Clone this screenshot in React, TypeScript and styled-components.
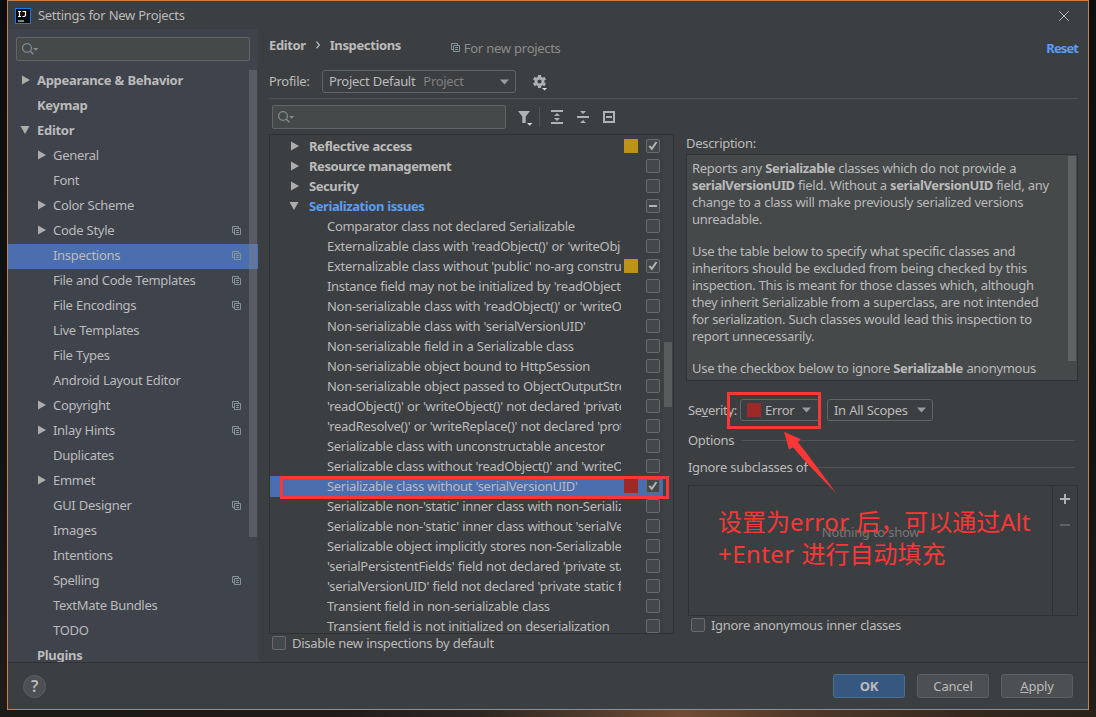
import React from "react";
import styled, { createGlobalStyle, css } from "styled-components";

const Global = createGlobalStyle`
  * { box-sizing: border-box; }
  body { margin: 0; }
`;

const Desktop = styled.div`
  position: relative;
  width: 1096px;
  height: 717px;
  padding: 0 7px 7px;
  overflow: hidden;
  font: 13px/20px "Noto Sans", "Noto Sans CJK SC", sans-serif;
  letter-spacing: -0.3px;
  word-spacing: 0.3px;
  color: #bbbbbb;
  background:
    linear-gradient(90deg, #1d1b17 0, #1f1c18 330px, #2c2723 480px, #4f3a2c 590px, #704c33 680px, #503828 800px, #35291f 960px, #2a2119 1096px) 0 709px / 1096px 8px no-repeat,
    linear-gradient(#0b0d0f 0, #101214 60%, #211d18 100%);
`;

const Dialog = styled.div`
  width: 1082px;
  height: 710px;
  border: 1px solid #cc7f48;
  background: #3c3f41;
  display: flex;
  flex-direction: column;
`;

const TitleBar = styled.header`
  height: 28px;
  flex: none;
  display: flex;
  align-items: center;
  padding: 1px 18px 0 7px;
  gap: 7px;
  svg:last-child { margin-left: auto; }
`;

const TitleText = styled.span`
  padding-bottom: 2px;
`;

const Body = styled.div`
  flex: 1;
  min-height: 0;
  display: flex;
`;

const Sidebar = styled.nav`
  width: 250px;
  background: #3f434c;
  display: flex;
  flex-direction: column;
  padding-top: 8px;
`;

const SearchBox = styled.div<{ $indent?: number }>`
  width: 234px;
  height: 24px;
  flex: none;
  margin-left: ${p => p.$indent ?? 0}px;
  border: 1px solid #646464;
  border-radius: 2px;
  background: #45494a;
  padding: 3px 5px;
  line-height: 0;
`;

const SideScroll = styled.div`
  margin-top: 8px;
  flex: 1;
  min-height: 0;
  overflow: hidden;
  position: relative;
`;

const Thumb = styled.div<{ $top: number; $height: number; $right: number; $tint: string }>`
  position: absolute;
  top: ${p => p.$top}px;
  right: ${p => p.$right}px;
  width: 8px;
  height: ${p => p.$height}px;
  background: ${p => p.$tint};
`;

const SideRow = styled.div<{ $level: number; $selected?: boolean }>`
  height: 25px;
  display: flex;
  align-items: center;
  padding: 0 17px 3px ${p => (p.$level ? 28 : 12)}px;
  background: ${p => (p.$selected ? "#4b6eaf" : "transparent")};
  font-weight: ${p => (p.$level ? 400 : 700)};
  > svg:last-child { margin-left: auto; }
`;

const ArrowSlot = styled.span<{ $tree?: boolean }>`
  width: ${p => (p.$tree ? 20 : 17)}px;
  flex: none;
  display: flex;
  align-items: center;
`;

const Main = styled.main`
  flex: 1;
  min-width: 0;
  display: flex;
  flex-direction: column;
  padding: 0 10px 0 11px;
`;

const Crumbs = styled.div`
  height: 36px;
  flex: none;
  display: flex;
  align-items: center;
  padding-bottom: 5px;
`;

const Bold = styled.b`
  font-weight: 700;
  letter-spacing: -0.38px;
`;

const Chevron = styled.span`
  width: 24px;
  display: flex;
  justify-content: center;
`;

const Hint = styled.span`
  display: flex;
  align-items: center;
  gap: 4px;
  margin: 6px 0 0 50px;
  color: #8c8c8c;
`;

const Reset = styled.a`
  margin: 6px 0 0 auto;
  font-weight: 700;
  letter-spacing: -0.9px;
  color: #589df6;
`;

const ProfileRow = styled.div`
  height: 34px;
  flex: none;
  display: flex;
  align-items: center;
  border-bottom: 1px solid #515456;
`;

const Label = styled.span<{ $width?: number }>`
  width: ${p => (p.$width ? p.$width + "px" : "auto")};
  flex: none;
  white-space: nowrap;
  margin-top: -1px;
`;

const Combo = styled.div<{ $width: number; $height: number; $end?: number }>`
  width: ${p => p.$width}px;
  height: ${p => p.$height}px;
  flex: none;
  display: flex;
  align-items: center;
  border: 1px solid #646464;
  border-radius: 3px;
  padding: 0 ${p => p.$end ?? 6}px 0 6px;
  white-space: nowrap;
  > svg { margin-left: auto; }
`;

const ComboText = styled.span`
  margin-top: -1px;
`;

const Muted = styled.span`
  color: #808080;
  margin-left: 8px;
`;

const GearSlot = styled.span`
  margin-left: 15px;
  line-height: 0;
`;

const Columns = styled.div`
  flex: 1;
  min-height: 0;
  display: flex;
`;

const Left = styled.section`
  width: 405px;
  flex: none;
  display: flex;
  flex-direction: column;
`;

const Toolbar = styled.div`
  display: flex;
  align-items: center;
  height: 35px;
  padding: 1px 0 0 3px;
`;

const Tools = styled.div`
  display: flex;
  align-items: center;
  gap: 10px;
  margin-left: 11px;
`;

const Separator = styled.span`
  width: 1px;
  height: 20px;
  background: #515456;
  margin: 0 -1px 0 -4px;
`;

const Tree = styled.div`
  position: relative;
  height: 500px;
  border: 1px solid #2f3133;
  padding-top: 1px;
  overflow: hidden;
`;

const Gutter = styled.div`
  position: absolute;
  top: 0;
  right: 0;
  bottom: 0;
  width: 10px;
  background: #3f4244;
`;

const TreeRow = styled.div<{ $group?: boolean; $active?: boolean; $selected?: boolean }>`
  height: ${p => (p.$selected ? 21 : 20)}px;
  margin-bottom: ${p => (p.$selected ? -1 : 0)}px;
  display: flex;
  align-items: center;
  padding: 0 13px 0 ${p => (p.$group ? 19 : 57)}px;
  margin-right: ${p => (p.$selected ? 10 : 0)}px;
  ${p => p.$selected && css`padding-right: 3px; padding-bottom: 1px;`}
  background: ${p => (p.$selected ? "#4b6eaf" : "transparent")};
  font-weight: ${p => (p.$group ? 700 : 400)};
  ${p => p.$group && css`letter-spacing: -0.42px;`}
  color: ${p => (p.$active ? "#589df6" : "#bbbbbb")};
`;

const TreeText = styled.span`
  flex: 1;
  min-width: 0;
  overflow: hidden;
  white-space: nowrap;
  margin-right: 3px;
`;

const Swatch = styled.span<{ $tint: string; $gap?: number }>`
  width: 14px;
  height: 14px;
  flex: none;
  margin-right: ${p => p.$gap ?? 8}px;
  background: ${p => p.$tint};
`;

const Box = styled.span`
  width: 14px;
  height: 14px;
  flex: none;
  border: 1px solid #6b6b6b;
  border-radius: 2px;
  background: #43494a;
  line-height: 0;
  svg { display: block; }
`;

const CheckLine = styled.div<{ $indent: number }>`
  display: flex;
  align-items: center;
  height: 14px;
  gap: 6px;
  padding-left: ${p => p.$indent}px;
  margin-top: 2px;
`;

const Right = styled.section`
  width: 392px;
  margin-left: 12px;
  padding-top: 35px;
  display: flex;
  flex-direction: column;
`;

const DescBox = styled.div`
  position: relative;
  height: 227px;
  margin-top: 1px;
  border: 1px solid #2f3133;
  background: #45494a;
  padding: 5px 5px 0;
  line-height: 17px;
  overflow: hidden;
  p { margin: 0 0 15px; white-space: nowrap; }
`;

const SeverityRow = styled.div`
  display: flex;
  align-items: center;
  height: 22px;
  margin-top: 18px;
  padding-left: 2px;
`;

const Spacer = styled.span`
  width: 7px;
`;

const Section = styled.div<{ $top: number }>`
  display: flex;
  align-items: center;
  gap: 7px;
  height: 20px;
  margin: ${p => p.$top}px 3px 0 2px;
  white-space: nowrap;
  &::after { content: ""; flex: 1; height: 1px; background: #515456; }
`;

const ListBox = styled.div`
  height: 131px;
  margin: 8px 0 0 2px;
  border: 1px solid #2f3133;
  display: flex;
`;

const ListEmpty = styled.div`
  flex: 1;
  display: flex;
  justify-content: center;
  padding-top: 36px;
  color: #777777;
`;

const ListTools = styled.div`
  width: 25px;
  border-left: 1px solid #2f3133;
  padding: 6px 0 0 5px;
  line-height: 0;
  display: flex;
  flex-direction: column;
  gap: 12px;
`;

const Footer = styled.footer`
  height: 47px;
  flex: none;
  border-top: 1px solid #2f3133;
  display: flex;
  align-items: center;
  padding: 0 15px;
  gap: 12px;
`;

const Help = styled.span`
  width: 23px;
  height: 23px;
  border-radius: 50%;
  border: 1px solid #5e6060;
  background: #4c5052;
  margin-right: auto;
  text-align: center;
  font-size: 16px;
  font-weight: 600;
  line-height: 21px;
`;

const Button = styled.button<{ $primary?: boolean }>`
  width: 72px;
  height: 24px;
  padding: 0;
  border: 1px solid ${p => (p.$primary ? "#4c708c" : "#5e6060")};
  border-radius: 3px;
  background: ${p => (p.$primary ? "#365880" : "#4c5052")};
  color: #bbbbbb;
  font: inherit;
  letter-spacing: -0.2px;
  font-weight: ${p => (p.$primary ? 700 : 400)};
`;

const Mark = styled.div<{ $x: number; $y: number; $w: number; $h: number }>`
  position: absolute;
  left: ${p => p.$x}px;
  top: ${p => p.$y}px;
  width: ${p => p.$w}px;
  height: ${p => p.$h}px;
  border: 3px solid #fd3636;
`;

const Pointer = styled.svg`
  position: absolute;
  left: 780px;
  top: 428px;
`;

const Note = styled.div`
  position: absolute;
  left: 718px;
  top: 506px;
  font: 24px/32px "Noto Sans", "Noto Sans CJK SC", sans-serif;
  letter-spacing: 0;
  word-spacing: 0;
  color: #fd3636;
  white-space: nowrap;
`;

const Latin = styled.span`
  letter-spacing: 0.45px;
`;

const Tri = ({ open }: { open?: boolean }) => (
  <svg width="10" height="10" viewBox="0 0 10 10" fill="#adadad">
    {open ? <path d="M.5 1h9L5 9z" /> : <path d="M2 .5v9L10 5z" />}
  </svg>
);

const Down = () => (
  <svg width="9" height="6" viewBox="0 0 9 6" fill="#9a9da0"><path d="M0 .5h9L4.5 5.5z" /></svg>
);

const Magnifier = () => (
  <svg width="18" height="16" viewBox="0 0 18 16" fill="none" stroke="#7f8b91" strokeWidth="1.3">
    <circle cx="5" cy="7" r="4.4" />
    <path d="M8.3 10.3l3 3" strokeWidth="1.6" />
    <path d="M11 7h5.4L13.7 9.8z" fill="#7f8b91" stroke="none" />
  </svg>
);

const Copy = () => (
  <svg width="9" height="9" viewBox="0 0 9 9" fill="none" stroke="#87939a">
    <path d="M2 6.5H.5v-6h6V2M2.500 2.500h6v6h-6zM4 4.500h3M4 6.500h3" />
  </svg>
);

const Check = ({ state }: { state: string }) => (
  <Box>
    {state === "on" && (
      <svg width="12" height="12" viewBox="0 0 12 12" fill="none" stroke="#b4b4b4" strokeWidth="2"><path d="M2.300 5.800l2.500 3L9.500 2" /></svg>
    )}
    {state === "mixed" && (
      <svg width="12" height="12" viewBox="0 0 12 12"><path d="M2 5h8v2H2z" fill="#b4b4b4" /></svg>
    )}
  </Box>
);

type Side = { t: string; level?: number; arrow?: "open" | "closed"; copy?: boolean; sel?: boolean };
const side: Side[] = [
  { t: "Appearance & Behavior", arrow: "closed" },
  { t: "Keymap" },
  { t: "Editor", arrow: "open" },
  { t: "General", level: 1, arrow: "closed" },
  { t: "Font", level: 1 },
  { t: "Color Scheme", level: 1, arrow: "closed" },
  { t: "Code Style", level: 1, arrow: "closed", copy: true },
  { t: "Inspections", level: 1, copy: true, sel: true },
  { t: "File and Code Templates", level: 1, copy: true },
  { t: "File Encodings", level: 1, copy: true },
  { t: "Live Templates", level: 1 },
  { t: "File Types", level: 1 },
  { t: "Android Layout Editor", level: 1 },
  { t: "Copyright", level: 1, arrow: "closed", copy: true },
  { t: "Inlay Hints", level: 1, arrow: "closed", copy: true },
  { t: "Duplicates", level: 1 },
  { t: "Emmet", level: 1, arrow: "closed" },
  { t: "GUI Designer", level: 1, copy: true },
  { t: "Images", level: 1 },
  { t: "Intentions", level: 1 },
  { t: "Spelling", level: 1, copy: true },
  { t: "TextMate Bundles", level: 1 },
  { t: "TODO", level: 1 },
  { t: "Plugins" },
];

type Insp = { t: string; group?: "open" | "closed"; state?: string; tint?: string; sel?: boolean };
const inspections: Insp[] = [
  { t: "Reflective access", group: "closed", state: "on", tint: "#be9117" },
  { t: "Resource management", group: "closed" },
  { t: "Security", group: "closed" },
  { t: "Serialization issues", group: "open", state: "mixed" },
  { t: "Comparator class not declared Serializable" },
  { t: "Externalizable class with 'readObject()' or 'writeObject()'" },
  { t: "Externalizable class without 'public' no-arg constructor", state: "on", tint: "#be9117" },
  { t: "Instance field may not be initialized by 'readObject()'" },
  { t: "Non-serializable class with 'readObject()' or 'writeObject()'" },
  { t: "Non-serializable class with 'serialVersionUID'" },
  { t: "Non-serializable field in a Serializable class" },
  { t: "Non-serializable object bound to HttpSession" },
  { t: "Non-serializable object passed to ObjectOutputStream" },
  { t: "'readObject()' or 'writeObject()' not declared 'private'" },
  { t: "'readResolve()' or 'writeReplace()' not declared 'protected'" },
  { t: "Serializable class with unconstructable ancestor" },
  { t: "Serializable class without 'readObject()' and 'writeObject()'" },
  { t: "Serializable class without 'serialVersionUID'", state: "on", tint: "#9e2927", sel: true },
  { t: "Serializable non-'static' inner class with non-Serializable outer" },
  { t: "Serializable non-'static' inner class without 'serialVersionUID'" },
  { t: "Serializable object implicitly stores non-Serializable object" },
  { t: "'serialPersistentFields' field not declared 'private static final'" },
  { t: "'serialVersionUID' field not declared 'private static final long'" },
  { t: "Transient field in non-serializable class" },
  { t: "Transient field is not initialized on deserialization" },
];

export default function App() {
  return (
    <Desktop>
      <Global />
      <Dialog>
        <TitleBar>
          <svg width="16" height="16" viewBox="0 0 16 16">
            <rect x=".5" y=".5" width="15" height="15" fill="#0a0a0a" stroke="#137cf3" />
            <path d="M3 3.500h3M4.500 3.500v5M3 8.500h3M7.500 3.500h3v4L9.500 8.500H7.500M3 13h6" fill="none" stroke="#fff" strokeWidth="1.200" />
          </svg>
          <TitleText>Settings for New Projects</TitleText>
          <svg width="12" height="12" viewBox="0 0 12 12" stroke="#b4b4b4" strokeWidth="1"><path d="M1 1l10 10M11 1L1 11" /></svg>
        </TitleBar>
        <Body>
          <Sidebar>
            <SearchBox $indent={8}><Magnifier /></SearchBox>
            <SideScroll>
              {side.map(r => (
                <SideRow key={r.t} $level={r.level ?? 0} $selected={r.sel}>
                  <ArrowSlot>{r.arrow && <Tri open={r.arrow === "open"} />}</ArrowSlot>
                  <span>{r.t}</span>
                  {r.copy && <Copy />}
                </SideRow>
              ))}
              <Thumb $top={1} $height={467} $right={1} $tint="rgba(130,130,138,.4)" />
            </SideScroll>
          </Sidebar>
          <Main>
            <Crumbs>
              <Bold>Editor</Bold>
              <Chevron>
                <svg width="6" height="8" viewBox="0 0 6 8" fill="none" stroke="#bbbbbb" strokeWidth="1.300"><path d="M1.500 .7L4.300 4L1.500 7.300" /></svg>
              </Chevron>
              <Bold>Inspections</Bold>
              <Hint><Copy />For new projects</Hint>
              <Reset>Reset</Reset>
            </Crumbs>
            <ProfileRow>
              <Label $width={53}>Profile:</Label>
              <Combo $width={194} $height={23}>
                <ComboText>Project Default<Muted>Project</Muted></ComboText>
                <Down />
              </Combo>
              <GearSlot>
                <svg width="18" height="19" viewBox="0 0 18 19">
                  <g transform="translate(8.500 9.500)" fill="none" stroke="#afb1b3">
                    <circle r="3.500" strokeWidth="2.800" />
                    <path d="M0-4.300V-6.600M0 4.300V6.600M3.720-2.150L5.700-3.300M-3.720 2.150L-5.700 3.300M3.720 2.150L5.700 3.300M-3.720-2.150L-5.700-3.300" strokeWidth="3.200" />
                  </g>
                  <path d="M11 16h5l-2.500 2.500z" fill="#e0e0e0" />
                </svg>
              </GearSlot>
            </ProfileRow>
            <Columns>
              <Left>
                <Toolbar>
                  <SearchBox><Magnifier /></SearchBox>
                  <Tools>
                    <svg width="16" height="18" viewBox="0 0 16 18">
                      <path d="M1 3h12L8.700 8.500V15H5.300V8.500z" fill="#afb1b3" />
                      <path d="M10 15h5.500L12.700 17.700z" fill="#d8d8d8" />
                    </svg>
                    <Separator />
                    <svg width="16" height="16" viewBox="0 0 16 16" fill="#afb1b3">
                      <path d="M2 1h12v2H2zM2 13h12v2H2zM8 4l3 3H5zM8 12l3-3H5z" />
                    </svg>
                    <svg width="16" height="16" viewBox="0 0 16 16" fill="#afb1b3">
                      <path d="M2 7h12v2H2zM5 2h6L8 5zM5 14h6l-3-3z" />
                    </svg>
                    <svg width="16" height="16" viewBox="0 0 16 16" fill="none" stroke="#afb1b3" strokeWidth="2">
                      <path d="M3 3h10v10H3zM5 8h6" />
                    </svg>
                  </Tools>
                </Toolbar>
                <Tree>
                  <Gutter />
                  {inspections.map(r => (
                    <TreeRow key={r.t} $group={!!r.group} $active={r.group === "open"} $selected={r.sel}>
                      {r.group && <ArrowSlot $tree><Tri open={r.group === "open"} /></ArrowSlot>}
                      <TreeText>{r.t}</TreeText>
                      <Swatch $tint={r.tint ?? "transparent"} />
                      <Check state={r.state ?? "off"} />
                    </TreeRow>
                  ))}
                  <Thumb $top={207} $height={65} $right={1} $tint="#595c5d" />
                </Tree>
                <CheckLine $indent={3}><Check state="off" />Disable new inspections by default</CheckLine>
              </Left>
              <Right>
                <Label>Description:</Label>
                <DescBox>
                  <p>Reports any <Bold>Serializable</Bold> classes which do not provide a<br /><Bold>serialVersionUID</Bold> field. Without a <Bold>serialVersionUID</Bold> field, any<br />change to a class will make previously serialized versions<br />unreadable.</p>
                  <p>Use the table below to specify what specific classes and<br />inheritors should be excluded from being checked by this<br />inspection. This is meant for those classes which, although<br />they inherit Serializable from a superclass, are not intended<br />for serialization. Such classes would lead this inspection to<br />report unnecessarily.</p>
                  <p>Use the checkbox below to ignore <Bold>Serializable</Bold> anonymous</p>
                  <Thumb $top={1} $height={205} $right={1} $tint="#5f6364" />
                </DescBox>
                <SeverityRow>
                  <Label $width={52}>Se<u>v</u>erity:</Label>
                  <Combo $width={80} $height={22} $end={8}><Swatch $tint="#9e2927" $gap={4} /><ComboText>Error</ComboText><Down /></Combo>
                  <Spacer />
                  <Combo $width={106} $height={22}><ComboText>In All Scopes</ComboText><Down /></Combo>
                </SeverityRow>
                <Section $top={9}>Options</Section>
                <Section $top={7}>Ignore subclasses of</Section>
                <ListBox>
                  <ListEmpty>Nothing to show</ListEmpty>
                  <ListTools>
                    <svg width="14" height="14" viewBox="0 0 14 14"><path d="M6 2h2v4h4v2H8v4H6V8H2V6h4z" fill="#afb1b3" /></svg>
                    <svg width="14" height="14" viewBox="0 0 14 14"><path d="M2 6h10v2H2z" fill="#606264" /></svg>
                  </ListTools>
                </ListBox>
                <CheckLine $indent={5}><Check state="off" />Ignore anonymous inner classes</CheckLine>
              </Right>
            </Columns>
          </Main>
        </Body>
        <Footer>
          <Help>?</Help>
          <Button $primary>OK</Button>
          <Button>Cancel</Button>
          <Button><u>A</u>pply</Button>
        </Footer>
      </Dialog>
      <Mark $x={280} $y={476} $w={389} $h={23} />
      <Mark $x={727} $y={392} $w={94} $h={37} />
      <Pointer width="60" height="70" viewBox="780 428 60 70">
        <path d="M784 431.700L800.700 439.300L798 442.300Q806 452 836 493Q802 459 793.300 447.300L789 449.500z" fill="#fd3636" />
      </Pointer>
      <Note>设置为<Latin>error </Latin>后，可以通过Alt<br /><Latin>+Enter </Latin>进行自动填充</Note>
    </Desktop>
  );
}
